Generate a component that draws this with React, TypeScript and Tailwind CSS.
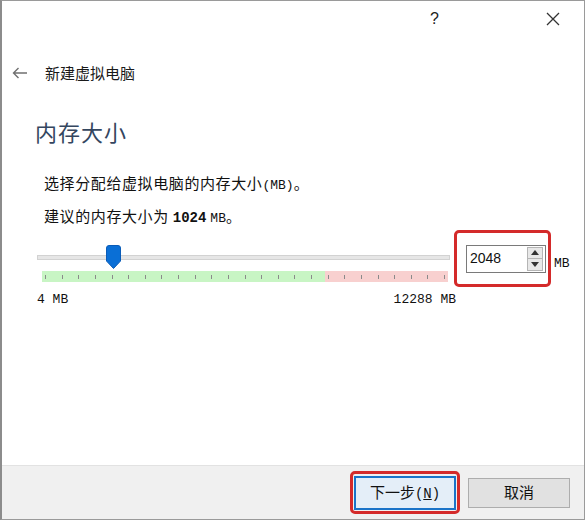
import React from "react"

const cjk = "font-['Noto_Sans_CJK_SC','Noto_Sans',sans-serif]"
const mono = "font-['Liberation_Mono','Noto_Sans_CJK_SC',monospace]"

function Ticks() {
  const ticks = Array.from({ length: 25 })
  return (
    <div className="relative h-[11px] flex">
      <div className="w-[283px] bg-[#c8f5c4]" />
      <div className="flex-1 bg-[#f8d0cf]" />
      <div className="absolute inset-0 flex justify-between items-center px-[3px]">
        {ticks.map((_, i) => (
          <div key={i} className="w-px h-[4px] bg-[#8a8a8a]" />
        ))}
      </div>
    </div>
  )
}

function Handle() {
  return (
    <svg width="15" height="24" viewBox="0 0 15 24" className="absolute left-[68px] top-[-11px]">
      <path d="M3 0.5 H12 Q14.5 0.5 14.5 3 V16 L7.5 23.5 L0.5 16 V3 Q0.5 0.5 3 0.5 Z" fill="#0a6fd6" stroke="#0a5cb8" />
    </svg>
  )
}

export default function App() {
  return (
    <div className={`w-[587px] h-[521px] bg-white ${cjk}`}>
      <div className="w-[585px] h-[520px] border border-[#9a9a9a] border-l-2 border-l-[#8c8c8c] flex flex-col">
        <div className="h-[36px] flex justify-end items-center pr-[22px] text-[#222]">
          <span className="text-[16px] mr-[107px] font-['Liberation_Sans',sans-serif]">?</span>
          <svg width="14" height="14" viewBox="0 0 14 14" className="mr-[2px]">
            <path d="M1 1 L13 13 M13 1 L1 13" stroke="#333" strokeWidth="1.3" />
          </svg>
        </div>

        <div className="flex items-center h-[30px] mt-[21px] pl-[10px]">
          <svg width="16" height="12" viewBox="0 0 16 12">
            <path d="M15 6 H2 M6.5 1 L1.5 6 L6.5 11" stroke="#707070" strokeWidth="1.4" fill="none" />
          </svg>
          <span className="ml-[17px] text-[15px] text-[#1a1a1a]">新建虚拟电脑</span>
        </div>

        <div className="pl-[33px] mt-[28px] text-[22px] tracking-[1px] leading-[30px] text-[#34465f]">内存大小</div>

        <div className="pl-[42px] mt-[27px] text-[15px] tracking-[0.6px] leading-[20px] text-[#111]">
          选择分配给虚拟电脑的内存大小<span className={`${mono} text-[13px] tracking-normal`}>(MB)</span>。
        </div>
        <div className="pl-[42px] mt-[10px] text-[15px] tracking-[0.6px] leading-[20px] text-[#111]">
          建议的内存大小为 <span className={`${mono} font-bold text-[14px] tracking-normal`}>1024</span>{" "}
          <span className={`${mono} text-[13px] tracking-normal`}>MB</span>。
        </div>

        <div className="flex items-start mt-[3px]">
          <div className="ml-[35px] w-[413px] flex flex-col">
            <div className="relative mt-[23px] h-[5px] bg-[#e6e6e6] border border-[#d2d2d2]">
              <Handle />
            </div>
            <div className="mt-[11px] ml-[5px] mr-[2px]">
              <Ticks />
            </div>
            <div className={`flex justify-between mt-[8px] text-[13px] text-[#111] ${mono}`}>
              <span>4 MB</span>
              <span className="mr-[-6px]">12288 MB</span>
            </div>
          </div>

          <div className="ml-[4px] -mt-[2px] w-[97px] h-[57px] border-[3px] border-[#d42a2a] rounded-[5px] flex items-center pl-[9px]">
            <div className="w-[80px] h-[28px] border border-[#7a7a7a] bg-white flex items-center">
              <span className="flex-1 pl-[3px] text-[14px] font-['Liberation_Sans',sans-serif] text-[#111]">2048</span>
              <div className="w-[16px] h-[24px] mr-[2px] flex flex-col border border-[#b5b5b5] bg-[#e8e8e8]">
                <div className="flex-1 flex items-center justify-center border-b border-[#b5b5b5]">
                  <svg width="8" height="5" viewBox="0 0 8 5"><path d="M0 5 L4 0 L8 5 Z" fill="#333" /></svg>
                </div>
                <div className="flex-1 flex items-center justify-center">
                  <svg width="8" height="5" viewBox="0 0 8 5"><path d="M0 0 L4 5 L8 0 Z" fill="#333" /></svg>
                </div>
              </div>
            </div>
          </div>
          <span className={`ml-[3px] mt-[22px] text-[13px] text-[#111] ${mono}`}>MB</span>
        </div>

        <div className="flex-1" />

        <div className="h-[54px] bg-[#f0f0f0] border-t border-[#e2e2e2] flex items-center justify-end pr-[14px]">
          <div className="w-[110px] h-[43px] border-[3px] border-[#d42a2a] rounded-[5px] flex items-center justify-center">
            <button className="w-[102px] h-[34px] border-2 border-[#1a73c8] bg-[#e4eef8] text-[15px] text-[#111]">
              下一步<span className={`${mono} text-[14px]`}>(<u>N</u>)</span>
            </button>
          </div>
          <button className="ml-[8px] w-[102px] h-[30px] border border-[#adadad] bg-[#e1e1e1] text-[15px] text-[#111]">
            取消
          </button>
        </div>
      </div>
    </div>
  )
}
